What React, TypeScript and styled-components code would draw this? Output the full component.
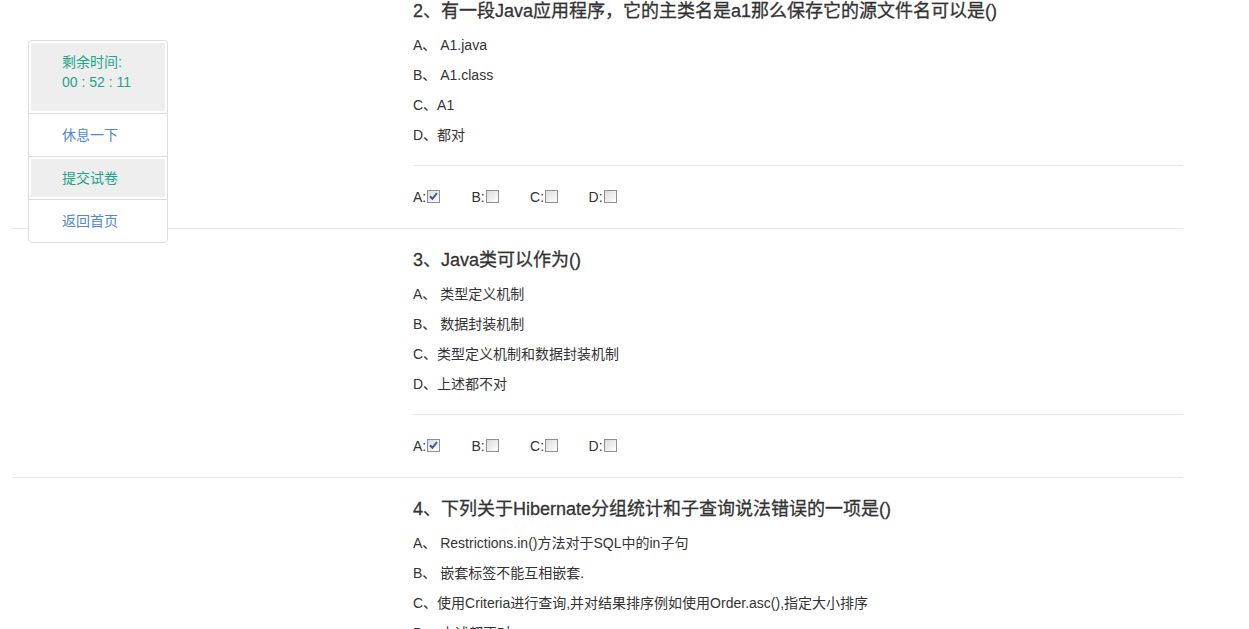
import React from "react";
import styled, { createGlobalStyle } from "styled-components";

const GlobalStyle = createGlobalStyle`
  html, body {
    margin: 0;
    padding: 0;
    background: #fff;
    overflow: hidden;
  }
  body {
    font-family: "Liberation Sans", Arial, "Noto Sans CJK SC", sans-serif;
    font-size: 14px;
    color: #333;
  }
`;

const Page = styled.div`
  padding-left: 12px;
  width: 1171px;
  margin-top: -21px;
`;

const Block = styled.section`
  border-top: 1px solid #e8e8e8;
  padding: 21px 0 0 401px;
`;

const Title = styled.h4`
  margin: 0;
  font-size: 18px;
  line-height: 20px;
  font-weight: 400;
  color: #333;
  -webkit-text-stroke: 0.3px #333;
`;

const Options = styled.div`
  margin-top: 9px;
`;

const Option = styled.div`
  line-height: 30px;
  height: 30px;
  white-space: nowrap;
`;

const Divider = styled.div`
  margin-top: 15px;
  border-top: 1px solid #e8e8e8;
`;

const AnswerRow = styled.div`
  display: flex;
  padding: 21px 0;
  line-height: 20px;
  height: 20px;
`;

const AnswerItem = styled.label`
  width: 58.5px;
  white-space: nowrap;
`;

const Box = styled.span<{ $checked?: boolean }>`
  display: inline-block;
  vertical-align: -1px;
  box-sizing: border-box;
  width: 13px;
  height: 13px;
  margin-left: 1px;
  border: 1px solid #8f8f8f;
  background: linear-gradient(135deg, #dcdcdc 0%, #f4f4f4 70%, #fff 100%);
  position: relative;
  svg {
    position: absolute;
    left: 0;
    top: 0;
  }
`;

const Sidebar = styled.aside`
  position: fixed;
  left: 28px;
  top: 40px;
  width: 140px;
  box-sizing: border-box;
  border: 1px solid #ddd;
  border-radius: 4px;
  background: #fff;
  font-size: 14px;
`;

const Cell = styled.div`
  padding: 2px;
  & + & {
    border-top: 1px solid #ddd;
  }
`;

const CellInner = styled.div<{ $gray?: boolean; $tone: "green" | "blue" }>`
  background: ${(p) => (p.$gray ? "#eeeeee" : "transparent")};
  color: ${(p) => (p.$tone === "green" ? "#1aa68a" : "#5086d6")};
  padding-left: 31px;
  height: 38px;
  line-height: 38px;
`;

const Timer = styled.div`
  background: #eeeeee;
  color: #1aa68a;
  padding: 9px 0 19px 31px;
  line-height: 20px;
`;

type Q = { title: string; options: string[]; checked: string };

const questions: Q[] = [
  {
    title: "2、有一段Java应用程序，它的主类名是a1那么保存它的源文件名可以是()",
    options: ["A、 A1.java", "B、 A1.class", "C、A1", "D、都对"],
    checked: "A",
  },
  {
    title: "3、Java类可以作为()",
    options: ["A、 类型定义机制", "B、 数据封装机制", "C、类型定义机制和数据封装机制", "D、上述都不对"],
    checked: "A",
  },
  {
    title: "4、下列关于Hibernate分组统计和子查询说法错误的一项是()",
    options: [
      "A、 Restrictions.in()方法对于SQL中的in子句",
      "B、 嵌套标签不能互相嵌套.",
      "C、使用Criteria进行查询,并对结果排序例如使用Order.asc(),指定大小排序",
      "D、 上述都不对",
    ],
    checked: "A",
  },
];

function CheckBox({ checked }: { checked?: boolean }) {
  return (
    <Box $checked={checked}>
      {checked && (
        <svg width="11" height="11" viewBox="0 0 11 11">
          <path d="M2 5.2 L4.4 7.8 L9 2.2" fill="none" stroke="#3d5aa0" strokeWidth="2" />
        </svg>
      )}
    </Box>
  );
}

export default function App() {
  return (
    <>
      <GlobalStyle />
      <Page>
        {questions.map((q) => (
          <Block key={q.title}>
            <Title>{q.title}</Title>
            <Options>
              {q.options.map((o) => (
                <Option key={o}>{o}</Option>
              ))}
            </Options>
            <Divider />
            <AnswerRow>
              {["A", "B", "C", "D"].map((l) => (
                <AnswerItem key={l}>
                  {l}:<CheckBox checked={q.checked === l} />
                </AnswerItem>
              ))}
            </AnswerRow>
          </Block>
        ))}
      </Page>
      <Sidebar>
        <Cell>
          <Timer>
            <div>剩余时间:</div>
            <div>00 : 52 : 11</div>
          </Timer>
        </Cell>
        <Cell>
          <CellInner $tone="blue">休息一下</CellInner>
        </Cell>
        <Cell>
          <CellInner $gray $tone="green">提交试卷</CellInner>
        </Cell>
        <Cell>
          <CellInner $tone="blue">返回首页</CellInner>
        </Cell>
      </Sidebar>
    </>
  );
}
